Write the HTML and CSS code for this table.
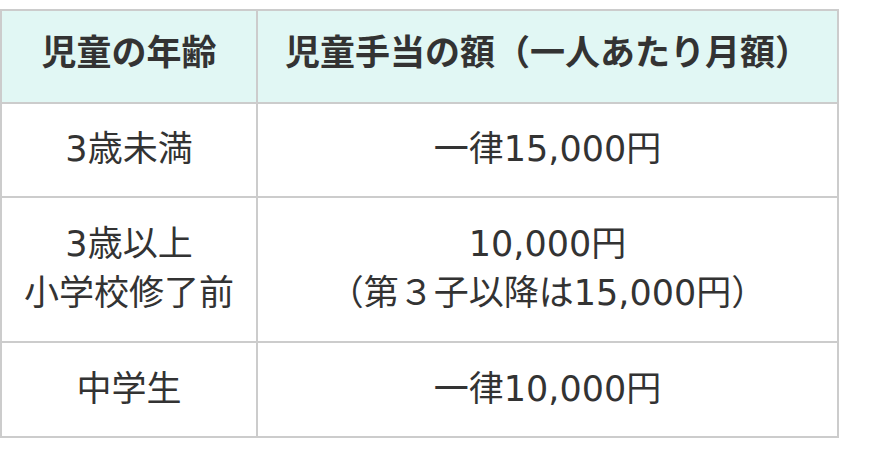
FILE: index.html
```html
<!DOCTYPE html>
<html lang="ja">
<head>
<meta charset="utf-8">
<link rel="stylesheet" href="styles.css">
</head>
<body>
<div class="wrap">
<table class="allowance">
  <thead>
    <tr><th class="c1">児童の年齢</th><th class="c2">児童手当の額（一人あたり月額）</th></tr>
  </thead>
  <tbody>
    <tr><td>3歳未満</td><td>一律15,000円</td></tr>
    <tr class="tall"><td>3歳以上<br>小学校修了前</td><td>10,000円<br>（第３子以降は15,000円）</td></tr>
    <tr class="last"><td>中学生</td><td>一律10,000円</td></tr>
  </tbody>
</table>
</div>
</body>
</html>
```

FILE: styles.css
```css
html, body {
  margin: 0;
  padding: 0;
  background: #ffffff;
}
.wrap {
  padding: 9px 0 0 0;
}
.allowance {
  border-collapse: collapse;
  width: 839px;
  font-family: "DejaVu Sans", "Noto Sans CJK JP", sans-serif;
  font-size: 35px;
  color: #333333;
  table-layout: fixed;
}
.allowance th,
.allowance td {
  border: 2px solid #cccccc;
  text-align: center;
  vertical-align: middle;
  line-height: 49px;
}
.allowance th {
  background: #e1f7f4;
  font-weight: bold;
  height: 85px;
  padding: 0 0 6px 0;
}
.allowance td {
  padding: 21px 0 22px 0;
  font-weight: normal;
}
.allowance .tall td {
  padding: 22px 0 23px 0;
}
.allowance .last td {
  padding: 22px 0 22px 0;
}
.c1 { width: 254px; }
.c2 { width: auto; }
```
